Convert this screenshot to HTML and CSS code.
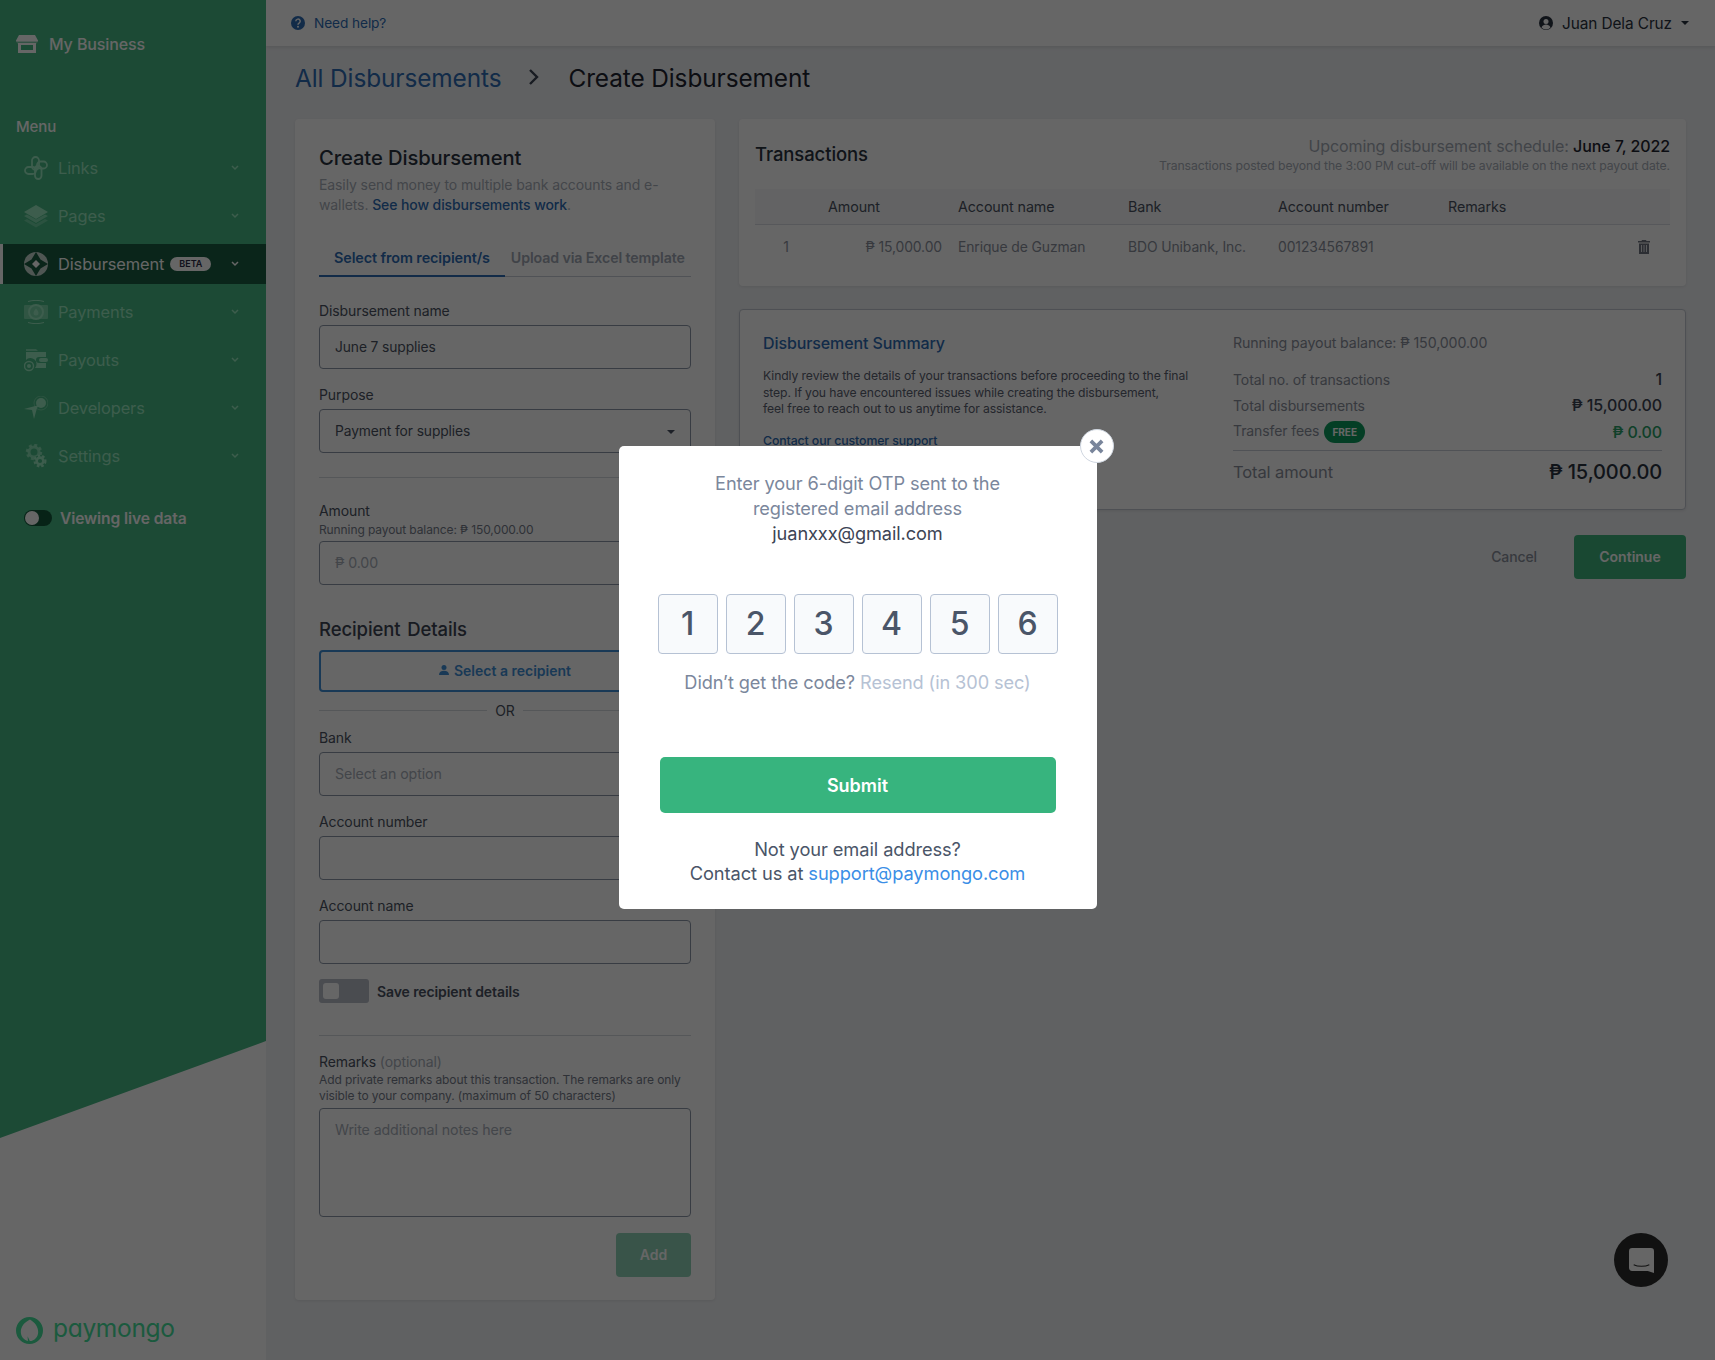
FILE: index.html
```html
<!DOCTYPE html>
<html lang="en">
<head>
  <meta charset="UTF-8">
  <title>Create Disbursement</title>
  <link rel="stylesheet" href="styles.css">
</head>
<body>

  <!-- Sidebar -->
  <aside class="sidebar">
    <div class="biz">
      <svg class="biz-icon" viewBox="0 0 22 18"><path d="M3 0h16l3 5.500a3 3 0 0 1-2 3V18H2V8.500a3 3 0 0 1-2-3z" fill="#fff"/><path d="M0 7.200h22" stroke="#47b985" stroke-width="1"/><rect x="5" y="10" width="12" height="5" fill="#47b985"/></svg>
      <span>My Business</span>
    </div>
    <div class="menu-label">Menu</div>
    <nav class="nav">
      <div class="nav-row">
        <svg class="nav-icon" viewBox="0 0 24 24" fill="none" stroke="#9ae8c0" stroke-width="1.800"><rect x="8" y="1" width="7" height="13" rx="3.500"/><rect x="11" y="10" width="6.500" height="13" rx="3.250"/><rect x="13" y="5.500" width="10" height="7" rx="3.500"/><rect x="1" y="11" width="11" height="7" rx="3.500"/><rect x="10" y="10" width="4" height="4" transform="rotate(45 12 12)" fill="#9ae8c0" stroke="none"/></svg>
        <span class="nav-text">Links</span>
        <svg class="chev" viewBox="0 0 8 6"><path d="M1 1l3 3 3-3" fill="none" stroke="#9ae8c0" stroke-width="1.500"/></svg>
      </div>
      <div class="nav-row">
        <svg class="nav-icon" viewBox="0 0 24 24" fill="#9ae8c0"><path d="M12 1l12 7-12 7L0 8z"/><path d="M0 12l3-1.500 9 5 9-5 3 1.500-12 7z" opacity=".7"/><path d="M0 16.500l3-1.500 9 5 9-5 3 1.500-12 7z" opacity=".45"/></svg>
        <span class="nav-text">Pages</span>
        <svg class="chev" viewBox="0 0 8 6"><path d="M1 1l3 3 3-3" fill="none" stroke="#9ae8c0" stroke-width="1.500"/></svg>
      </div>
      <div class="nav-row active">
        <svg class="nav-icon" viewBox="0 0 24 24"><circle cx="12" cy="12" r="12" fill="#fff" opacity=".75"/><path d="M12 0l4.500 7.500L24 12l-7.500 4.500L12 24l-4.500-7.500L0 12l7.500-4.500z" fill="#195c41"/><path d="M12 8l4 4-4 4-4-4z" fill="#fff"/></svg>
        <span class="nav-text">Disbursement</span>
        <span class="beta">BETA</span>
        <svg class="chev" viewBox="0 0 8 6"><path d="M1 1l3 3 3-3" fill="none" stroke="#fff" stroke-width="1.500"/></svg>
      </div>
      <div class="nav-row">
        <svg class="nav-icon" viewBox="0 0 24 24" fill="none" stroke="#9ae8c0" stroke-width="2"><rect x="0" y="5" width="24" height="14" rx="1" fill="#9ae8c0" stroke="none" opacity=".6"/><circle cx="12" cy="12" r="7"/><path d="M12 8.500c2 2 2.500 3.500 2.500 4.500a2.500 2.500 0 0 1-5 0c0-1 .5-2.500 2.500-4.500z" fill="#9ae8c0" stroke="none"/><path d="M4 1.500c5-1.500 11-1.500 16 0M4 22.500c5 1.500 11 1.500 16 0" stroke-width="1"/></svg>
        <span class="nav-text">Payments</span>
        <svg class="chev" viewBox="0 0 8 6"><path d="M1 1l3 3 3-3" fill="none" stroke="#9ae8c0" stroke-width="1.500"/></svg>
      </div>
      <div class="nav-row">
        <svg class="nav-icon" viewBox="0 0 24 24" fill="#9ae8c0"><path d="M2 1h10l2 2H2z" opacity=".7"/><path d="M2 4h20v5h-7a3 3 0 0 0 0 6h7v5H11a6 6 0 0 0-9-8z"/><rect x="15" y="10" width="9" height="4" rx="2"/><circle cx="5" cy="18" r="4.500" fill="none" stroke="#9ae8c0" stroke-width="1.400"/><circle cx="5" cy="18" r="2"/></svg>
        <span class="nav-text">Payouts</span>
        <svg class="chev" viewBox="0 0 8 6"><path d="M1 1l3 3 3-3" fill="none" stroke="#9ae8c0" stroke-width="1.500"/></svg>
      </div>
      <div class="nav-row">
        <svg class="nav-icon" viewBox="0 0 24 24" fill="#9ae8c0"><circle cx="17" cy="7" r="5"/><circle cx="17" cy="7" r="7" fill="none" stroke="#9ae8c0" stroke-width="1" opacity=".5"/><path d="M15 9l-2 3-3 11-2-9-8-1z"/></svg>
        <span class="nav-text">Developers</span>
        <svg class="chev" viewBox="0 0 8 6"><path d="M1 1l3 3 3-3" fill="none" stroke="#9ae8c0" stroke-width="1.500"/></svg>
      </div>
      <div class="nav-row">
        <svg class="nav-icon" viewBox="0 0 24 24" fill="none" stroke="#9ae8c0"><circle cx="10" cy="8" r="5" stroke-width="3" opacity=".75"/><circle cx="10" cy="8" r="7" stroke-width="2.500" stroke-dasharray="3 2.500" opacity=".75"/><circle cx="16" cy="17" r="6" fill="#47b985" stroke="none"/><circle cx="16" cy="17" r="3.400" stroke-width="2.600"/><circle cx="16" cy="17" r="5.400" stroke-width="2.200" stroke-dasharray="2.500 2"/></svg>
        <span class="nav-text">Settings</span>
        <svg class="chev" viewBox="0 0 8 6"><path d="M1 1l3 3 3-3" fill="none" stroke="#9ae8c0" stroke-width="1.500"/></svg>
      </div>
    </nav>
    <div class="live">
      <span class="live-toggle"><span class="live-knob"></span></span>
      <span>Viewing live data</span>
    </div>
    <div class="logo">
      <svg class="logo-icon" viewBox="0 0 28 28"><path fill-rule="evenodd" d="M14 0a14 14 0 1 1 0 28 14 14 0 0 1 0-28zm.5 2.500C8.500 5.500 5 10 5 15.500c0 4.500 3 8.200 7.400 9.300l-.4-4.800 2.300 5c5-.3 8.700-4.300 8.700-9.500 0-5.500-3.500-10-8.500-13z" fill="#44e19b"/></svg>
      <span class="logo-text">paymongo</span>
    </div>
  </aside>

  <div class="main">
    <header class="topbar">
      <a class="help">
        <svg class="help-icon" viewBox="0 0 14 14"><circle cx="7" cy="7" r="7" fill="#2d6cb5"/><path d="M4.800 5.300a2.200 2.200 0 1 1 3.300 1.900c-.8.500-1.100.8-1.100 1.500" fill="none" stroke="#fff" stroke-width="1.500"/><circle cx="7" cy="10.800" r="1" fill="#fff"/></svg>
        Need help?
      </a>
      <div class="user">
        <svg class="user-icon" viewBox="0 0 14 14"><circle cx="7" cy="7" r="7" fill="#2a3240"/><circle cx="7" cy="5.400" r="2.500" fill="#fff"/><path d="M2.500 11.500c1-2.300 2.800-3 4.500-3s3.500.7 4.500 3a6 6 0 0 1-9 0z" fill="#fff"/></svg>
        <span>Juan Dela Cruz</span>
        <span class="caret"></span>
      </div>
    </header>

    <div class="content">
      <div class="crumbs">
        <a class="crumb-link">All Disbursements</a>
        <svg class="crumb-sep" viewBox="0 0 12 18"><path d="M2 2l7 7-7 7" fill="none" stroke="#3c4454" stroke-width="2.400"/></svg>
        <span class="crumb-now">Create Disbursement</span>
      </div>

      <div class="columns">
        <!-- Form -->
        <section class="card form-card">
          <h2 class="form-title">Create Disbursement</h2>
          <p class="form-desc">Easily send money to multiple bank accounts and e-wallets. <a class="link">See how disbursements work</a>.</p>
          <div class="tabs">
            <div class="tab active">Select from recipient/s</div>
            <div class="tab">Upload via Excel template</div>
          </div>

          <label class="label first">Disbursement name</label>
          <div class="input">June 7 supplies</div>
          <label class="label">Purpose</label>
          <div class="input select">Payment for supplies<span class="caret"></span></div>
          <hr class="rule">
          <label class="label amount">Amount</label>
          <div class="hint">Running payout balance: ₱ 150,000.00</div>
          <div class="input muted amount-input">₱ 0.00</div>

          <h3 class="sub-title">Recipient Details</h3>
          <button class="pick">
            <svg class="pick-icon" viewBox="0 0 12 12"><circle cx="6" cy="3" r="3" fill="#3f8fd6"/><path d="M0 12c0-3.500 2.500-5 6-5s6 1.500 6 5z" fill="#3f8fd6"/></svg>
            Select a recipient
          </button>
          <div class="or"><span>OR</span></div>
          <label class="label bank">Bank</label>
          <div class="input muted">Select an option</div>
          <label class="label">Account number</label>
          <div class="input"></div>
          <label class="label">Account name</label>
          <div class="input"></div>
          <div class="save">
            <span class="save-toggle"><span class="save-knob"></span></span>
            <span>Save recipient details</span>
          </div>
          <hr class="rule save-rule">
          <label class="label remarks">Remarks <span class="opt">(optional)</span></label>
          <div class="hint tall">Add private remarks about this transaction. The remarks are only visible to your company. (maximum of 50 characters)</div>
          <div class="input textarea muted">Write additional notes here</div>
          <div class="add-row"><button class="add">Add</button></div>
        </section>

        <div class="right">
          <!-- Transactions -->
          <section class="card tx-card">
            <div class="tx-head">
              <h2 class="tx-title">Transactions</h2>
              <div class="tx-note">
                <div class="tx-sched">Upcoming disbursement schedule: <b>June 7, 2022</b></div>
                <div class="tx-cut">Transactions posted beyond the 3:00 PM cut-off will be available on the next payout date.</div>
              </div>
            </div>
            <div class="tx-row tx-th">
              <span></span>
              <span class="amt-h">Amount</span>
              <span>Account name</span>
              <span>Bank</span>
              <span>Account number</span>
              <span>Remarks</span>
              <span></span>
            </div>
            <div class="tx-row tx-td">
              <span class="num">1</span>
              <span class="amt">₱ 15,000.00</span>
              <span>Enrique de Guzman</span>
              <span>BDO Unibank, Inc.</span>
              <span>001234567891</span>
              <span></span>
              <svg class="trash" viewBox="0 0 12 14"><path d="M4 0h4l.5 1H12v1.500H0V1h3.500zM1 3.500h10V14H1z" fill="#6e7480"/><path d="M3.500 5v7M6 5v7M8.500 5v7" stroke="#fff" stroke-width=".8"/></svg>
            </div>
          </section>

          <!-- Summary -->
          <section class="card sum-card">
            <div class="sum-left">
              <h3 class="sum-title">Disbursement Summary</h3>
              <p class="sum-desc">Kindly review the details of your transactions before proceeding to the final<br>step. If you have encountered issues while creating the disbursement,<br>feel free to reach out to us anytime for assistance.</p>
              <a class="sum-link">Contact our customer support</a>
            </div>
            <div class="sum-right">
              <div class="sum-balance">Running payout balance: ₱ 150,000.00</div>
              <div class="sum-row first"><span>Total no. of transactions</span><b>1</b></div>
              <div class="sum-row"><span>Total disbursements</span><b>₱ 15,000.00</b></div>
              <div class="sum-row"><span>Transfer fees <i class="free">FREE</i></span><b class="green">₱ 0.00</b></div>
              <div class="sum-total"><span>Total amount</span><b>₱ 15,000.00</b></div>
            </div>
          </section>

          <div class="actions">
            <a class="cancel">Cancel</a>
            <button class="continue">Continue</button>
          </div>
        </div>
      </div>
    </div>
  </div>

  <div class="chat">
    <svg class="chat-icon" viewBox="0 0 24 24"><path d="M3 0h18a3 3 0 0 1 3 3v21l-6-2H3a3 3 0 0 1-3-3V3a3 3 0 0 1 3-3z" fill="#fff"/><path d="M4.500 16c4 2 11 2 15 0" fill="none" stroke="#2b2b2b" stroke-width="1"/></svg>
  </div>

  <!-- OTP dialog -->
  <div class="overlay">
    <div class="modal">
      <button class="close">
        <svg class="close-icon" viewBox="0 0 12 12"><path d="M1.500 1.500l9 9M10.500 1.500l-9 9" stroke="#79859b" stroke-width="3"/></svg>
      </button>
      <div class="otp-msg">Enter your 6-digit OTP sent to the<br>registered email address<br><span class="otp-mail">juanxxx@gmail.com</span></div>
      <div class="otp-boxes">
        <div class="otp-box">1</div>
        <div class="otp-box">2</div>
        <div class="otp-box">3</div>
        <div class="otp-box">4</div>
        <div class="otp-box">5</div>
        <div class="otp-box">6</div>
      </div>
      <div class="resend">Didn’t get the code? <span class="resend-off">Resend (in 300 sec)</span></div>
      <button class="submit">Submit</button>
      <div class="contact">Not your email address?<br>Contact us at <a class="contact-link">support@paymongo.com</a></div>
    </div>
  </div>

</body>
</html>
```

FILE: styles.css
```css
* { box-sizing: border-box; }
html, body { margin: 0; height: 1360px; overflow: hidden; }
body { display: flex; background: #f0f2f5; font-family: Inter, "Noto Sans", sans-serif; color: #3c4454; font-size: 14px; letter-spacing: -0.1px; }
h2, h3 { margin: 0; font-weight: 500; }
p { margin: 0; }
button { font-family: inherit; border: none; }
hr { margin: 0; border: none; }

/* sidebar */
.sidebar { position: relative; width: 266px; height: 1360px; flex: none; background: #fff; display: flex; flex-direction: column; color: #fff; }
.sidebar::before { content: ""; position: absolute; inset: 0; background: #47b985; clip-path: polygon(0 0, 266px 0, 266px 1041px, 0 1138px); }
.sidebar > * { position: relative; }
.biz { display: flex; align-items: center; gap: 11px; height: 88px; padding-left: 16px; font-size: 16px; font-weight: 500; }
.biz-icon { width: 22px; height: 18px; }
.menu-label { margin-top: 28px; height: 22px; line-height: 22px; padding-left: 16px; font-size: 15px; font-weight: 500; }
.nav { margin-top: 10px; }
.nav-row { display: flex; align-items: center; height: 40px; margin-bottom: 8px; padding-left: 24px; color: #9ae8c0; font-size: 16.400px; }
.nav-row.active { background: #195c41; box-shadow: inset 3px 0 0 #fff; color: #fff; }
.nav-icon { width: 24px; height: 24px; flex: none; }
.nav-text { margin-left: 10px; }
.chev { width: 8px; height: 6px; position: absolute; left: 231px; }
.beta { margin-left: 6px; width: 41px; height: 14px; line-height: 14px; border-radius: 7px; background: #fff; color: #2a2a44; font-size: 9px; font-weight: 600; text-align: center; letter-spacing: 0; }
.live { display: flex; align-items: center; gap: 8px; margin-top: 26px; padding-left: 24px; height: 16px; font-size: 15.600px; font-weight: 600; }
.live-toggle { width: 28px; height: 16px; border-radius: 8px; background: #13573a; padding: 1px; }
.live-knob { display: block; width: 14px; height: 14px; border-radius: 50%; background: #fff; }
.logo { margin-top: auto; margin-bottom: 16px; padding-left: 16px; display: flex; align-items: center; gap: 10px; color: #44e19b; }
.logo-icon { width: 27px; height: 27px; }
.logo-text { font-size: 24.500px; font-weight: 400; line-height: 27px; letter-spacing: -0.3px; font-feature-settings: "cv11"; position: relative; top: -2px; }

/* top bar */
.main { flex: 1; min-width: 0; }
.topbar { height: 46px; background: #fff; box-shadow: 0 1px 4px rgba(0, 0, 0, 0.12); display: flex; align-items: center; justify-content: space-between; padding: 0 26px 0 25px; }
.help { display: flex; align-items: center; gap: 9px; color: #2d6cb5; font-size: 13.700px; }
.help-icon { width: 14px; height: 14px; }
.user { display: flex; align-items: center; color: #2a3240; font-size: 15.400px; }
.user-icon { width: 14px; height: 14px; margin-right: 9px; }
.caret { display: inline-block; width: 0; height: 0; border: 4px solid transparent; border-top-color: currentColor; border-bottom: none; margin-left: 9px; }

.content { padding: 0 29px; }
.crumbs { height: 73px; display: flex; align-items: center; font-size: 24.400px; padding-bottom: 10px; }
.crumb-link { color: #2d6cb5; }
.crumb-sep { width: 12px; height: 18px; margin: 0 28px 0 27px; position: relative; top: -1px; }
.crumb-now { color: #1f2530; }
.columns { display: flex; gap: 24px; align-items: flex-start; }
.card { background: #fff; border-radius: 4px; box-shadow: 0 1px 3px rgba(0, 0, 0, 0.08); }

/* form */
.form-card { width: 420px; height: 1181px; padding: 25px 24px 0; }
.form-title { font-size: 20.200px; line-height: 28px; color: #2a3240; }
.form-desc { margin-top: 3px; font-size: 14px; line-height: 20px; color: #a8aeb9; }
.link { color: #2d6cb5; font-weight: 500; }
.tabs { margin-top: 25px; display: flex; border-bottom: 1px solid #c9ced6; }
.tab { height: 37px; line-height: 36px; font-weight: 600; color: #a0a7b4; padding: 0 15px; font-size: 14.400px; margin-bottom: -1px; }
.tab.active { color: #2d6cb5; border-bottom: 2px solid #2d6cb5; margin-right: 6px; }
.tab:last-child { padding: 0; font-size: 14.200px; }
.label { display: block; margin-top: 16px; line-height: 20px; color: #4a5261; font-size: 14px; margin-bottom: 4px; }
.label.first { margin-top: 24px; }
.input { position: relative; height: 44px; line-height: 42px; border: 1px solid #8c96a8; border-radius: 4px; padding-left: 15px; color: #4a5261; font-size: 13.800px; }
.input.muted { color: #a8aeb9; font-size: 14.200px; }
.select .caret { position: absolute; right: 15px; top: 20px; color: #4a5261; }
.rule { height: 1px; background: #d5d9df; margin-top: 24px; }
.label.amount { margin-top: 23px; margin-bottom: 0; }
.hint { font-size: 12px; line-height: 16px; color: #757c8a; margin-top: 1px; }
.amount-input { margin-top: 3px; }
.sub-title { margin-top: 32px; font-size: 18.500px; line-height: 24px; color: #3c4454; word-spacing: 2px; }
.pick { display: flex; align-items: center; justify-content: center; gap: 5px; width: 100%; height: 42px; margin-top: 9px; padding-bottom: 3px; background: #fff; border: 2px solid #3f8fd6; border-radius: 4px; color: #3f8fd6; font-size: 14px; font-weight: 600; }
.pick-icon { width: 10px; height: 10px; }
.or { display: flex; align-items: center; gap: 8px; margin-top: 8px; height: 20px; color: #4a5261; }
.or::before, .or::after { content: ""; flex: 1; height: 1px; background: #d5d9df; }
.label.bank { margin-top: 8px; }
.save { display: flex; align-items: center; gap: 8px; height: 24px; margin-top: 15px; font-weight: 600; color: #4a5261; }
.save-toggle { width: 50px; height: 24px; border-radius: 3px; background: #b9bdc9; padding: 4px; }
.save-knob { display: block; width: 16px; height: 16px; border-radius: 3px; background: #fff; }
.save-rule { margin-top: 32px; }
.label.remarks { margin-bottom: 0; }
.opt { color: #a8aeb9; }
.hint.tall { margin-top: 0; }
.textarea { height: 109px; margin-top: 4px; line-height: 20px; padding-top: 11px; }
.add-row { display: flex; justify-content: flex-end; margin-top: 16px; }
.add { width: 75px; height: 44px; border-radius: 4px; background: #8fd3b6; color: #fff; font-size: 14px; font-weight: 600; padding-bottom: 2px; }

/* transactions */
.right { flex: 1; min-width: 0; }
.tx-card { height: 167px; padding: 16px 16px 0; }
.tx-head { display: flex; justify-content: space-between; align-items: center; height: 39px; margin-bottom: 15px; }
.tx-title { font-size: 18.500px; color: #2a3240; padding-bottom: 1px; }
.tx-note { text-align: right; }
.tx-sched { font-size: 16px; line-height: 23px; color: #a4aab5; }
.tx-sched b { font-weight: 500; color: #1f2530; }
.tx-cut { font-size: 12.250px; line-height: 16px; color: #a8aeb9; }
.tx-row { display: grid; grid-template-columns: 62px 141px 170px 150px 170px 1fr 52px; align-items: center; }
.tx-th { height: 36px; background: #f7f8fa; border-bottom: 1px solid #dadde3; color: #4a5261; font-size: 14.300px; }
.amt-h { padding-left: 11px; }
.tx-td { height: 43px; color: #8a909c; font-size: 13.900px; }
.num { text-align: center; }
.amt { text-align: right; padding-right: 16px; }
.trash { width: 12px; height: 14px; justify-self: center; }

/* summary */
.sum-card { display: grid; grid-template-columns: 470px 1fr; height: 201px; margin-top: 23px; padding: 21px 23px 0; border: 1px solid #c2c8d1; }
.sum-title { font-size: 16px; line-height: 24px; color: #2d6cb5; }
.sum-desc { margin-top: 13px; font-size: 12.200px; line-height: 16.500px; color: #5a6170; white-space: nowrap; }
.sum-link { display: block; margin-top: 15px; font-size: 12.300px; line-height: 16px; color: #2d6cb5; font-weight: 500; }
.sum-balance { line-height: 24px; color: #8a909c; font-size: 14.200px; }
.sum-row { display: flex; justify-content: space-between; align-items: center; height: 26.300px; color: #8a909c; }
.sum-row.first { margin-top: 11px; }
.sum-row b { font-size: 16px; font-weight: 500; color: #3c4454; }
.sum-row b.green { color: #28a068; }
.free { display: inline-block; width: 41px; height: 22px; line-height: 22px; border-radius: 11px; margin-left: 1px; background: #0c9c5c; color: #fff; font-size: 10px; font-weight: 700; font-style: normal; text-align: center; vertical-align: middle; letter-spacing: 0; }
.sum-total { display: flex; justify-content: space-between; align-items: center; height: 38px; margin-top: 5px; padding-top: 6px; border-top: 1px solid #c9ced6; font-size: 16.500px; color: #8a909c; }
.sum-total b { font-size: 20px; font-weight: 500; color: #2a3240; }
.actions { display: flex; justify-content: flex-end; align-items: center; gap: 37px; margin-top: 25px; }
.cancel { color: #8a909c; font-weight: 500; padding-bottom: 2px; }
.continue { width: 112px; height: 44px; border-radius: 4px; background: #3fb57d; color: #fff; font-size: 14px; font-weight: 600; padding-bottom: 2px; }

/* chat bubble */
.chat { position: fixed; left: 1614px; top: 1233px; width: 54px; height: 54px; border-radius: 50%; background: #2b2b2b; display: flex; align-items: center; justify-content: center; }
.chat-icon { width: 25px; height: 29px; }

/* dialog */
.overlay { position: fixed; inset: 0; background: rgba(0, 0, 0, 0.6); display: flex; justify-content: center; align-items: center; padding-bottom: 5px; }
.modal { position: relative; width: 478px; height: 463px; background: #fff; border-radius: 5px; text-align: center; padding-top: 25px; }
.close { position: absolute; right: -17px; top: -17px; width: 34px; height: 34px; border-radius: 50%; background: #fff; border: 1px solid #cfd6e0; display: flex; align-items: center; justify-content: center; padding: 0; }
.close-icon { width: 15px; height: 15px; }
.otp-msg { font-size: 18.200px; line-height: 25px; color: #7b879c; }
.otp-mail { color: #3c4454; }
.otp-boxes { display: flex; justify-content: center; gap: 8px; margin-top: 48px; }
.otp-box { width: 60px; height: 60px; line-height: 58px; border: 1px solid #b6c2d4; border-radius: 4px; background: #f8fafc; color: #4a5568; font-size: 32px; font-weight: 500; }
.resend { margin-top: 15px; font-size: 18.200px; line-height: 26px; color: #7b879c; }
.resend-off { color: #b6c2d4; }
.submit { display: block; width: 396px; height: 56px; margin: 62px auto 0; border-radius: 5px; background: #37b47e; color: #fff; font-size: 18px; font-weight: 600; }
.contact { margin-top: 24px; font-size: 18.300px; line-height: 24px; color: #4a5568; }
.contact-link { color: #3a8ee6; }
```
